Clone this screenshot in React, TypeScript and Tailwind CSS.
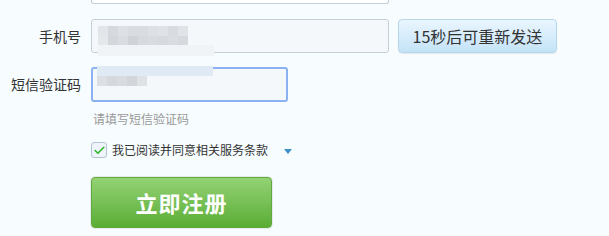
import { Check } from "lucide-react";

function Mosaic({ w, shades }: { w: number; shades: string[][] }) {
  return (
    <div className="flex flex-col">
      {shades.map((row, i) => (
        <div key={i} className="flex">
          {row.map((c, j) => (
            <div key={j} className="h-[10px]" style={{ width: w, backgroundColor: c }} />
          ))}
        </div>
      ))}
    </div>
  );
}

export default function App() {
  return (
    <div
      className="w-[609px] h-[236px] overflow-hidden bg-[#f7fcff] text-[#333]"
      style={{ fontFamily: '"Noto Sans CJK SC", "Noto Sans", sans-serif' }}
    >
      <div className="flex">
        <div className="w-[91px]" />
        <div className="w-[298px] h-[4px] border-x border-b border-[#c6cfd8] rounded-b-[3px] bg-white" />
      </div>

      <div className="flex items-center mt-[15px]">
        <div className="w-[81px] text-right text-[14px]">手机号</div>
        <div className="ml-[10px] w-[298px] h-[34px] border border-[#c6cfd8] rounded-[3px] bg-[#f4f8fb] relative">
          <div className="absolute left-[6px] top-[6px]">
            <Mosaic
              w={10}
              shades={[
                ["#e2e6ea", "#d6dadf", "#dde1e5", "#d9dde2", "#d9dde2", "#dde1e5", "#dfe2e6", "#d8dce0", "#e0e3e7"],
                ["#e5e8eb", "#d3d7db", "#d9dde1", "#cfd3d8", "#d6dadf", "#d8dce0", "#d6dadf", "#d9dce0", "#d6dade"],
              ]}
            />
          </div>
          <div className="absolute left-[6px] top-[25px] w-[116px] h-[11px] bg-[#f0f4f7]" />
        </div>
        <button className="ml-[9px] w-[159px] h-[34px] rounded-[4px] border border-[#b8d6ea] bg-gradient-to-b from-[#eaf6fe] to-[#c4e3f8] text-[16px] text-[#333] shadow-[0_1px_1px_rgba(0,0,0,0.08)]">
          15秒后可重新发送
        </button>
      </div>

      <div className="flex items-center mt-[14px]">
        <div className="w-[81px] text-right text-[14px]">短信验证码</div>
        <div className="ml-[10px] w-[197px] h-[35px] border-2 border-[#8ab2f0] rounded-[3px] bg-[#f4f8fb] relative">
          <div className="absolute left-[4px] -top-[3px] w-[116px] h-[10px] bg-[#dfeaf5]" />
          <div className="absolute left-[4px] top-[7px]">
            <Mosaic
              w={10}
              shades={[["#dcdfe3", "#d5d9dd", "#d8dbdf", "#d2d6da", "#dfe2e5"]]}
            />
          </div>
        </div>
      </div>

      <div className="ml-[93px] mt-[9px] text-[12px] text-[#999] leading-[16px]">请填写短信验证码</div>

      <div className="flex items-center ml-[91px] mt-[15px]">
        <div className="w-[16px] h-[16px] border border-[#b5c4d3] rounded-[3px] bg-[#eef4f9] flex items-center justify-center">
          <Check size={13} strokeWidth={3} className="text-[#2fb52f]" />
        </div>
        <span className="ml-[5px] text-[12px] text-[#333] leading-[16px]">我已阅读并同意相关服务条款</span>
        <svg width="8" height="5" viewBox="0 0 8 5" className="ml-[16px] mt-[2px]">
          <path d="M0 0H8L4 5Z" fill="#3f8fcb" />
        </svg>
      </div>

      <div className="ml-[90px] mt-[18px] w-[183px] h-[53px] rounded-[5px] bg-[#e5ebe8] p-[1px]">
        <button className="w-full h-full rounded-[4px] border border-[#63a93f] bg-gradient-to-b from-[#93d274] to-[#5aad33] text-white font-bold text-[22px] tracking-[1px]">
          立即注册
        </button>
      </div>
    </div>
  );
}
